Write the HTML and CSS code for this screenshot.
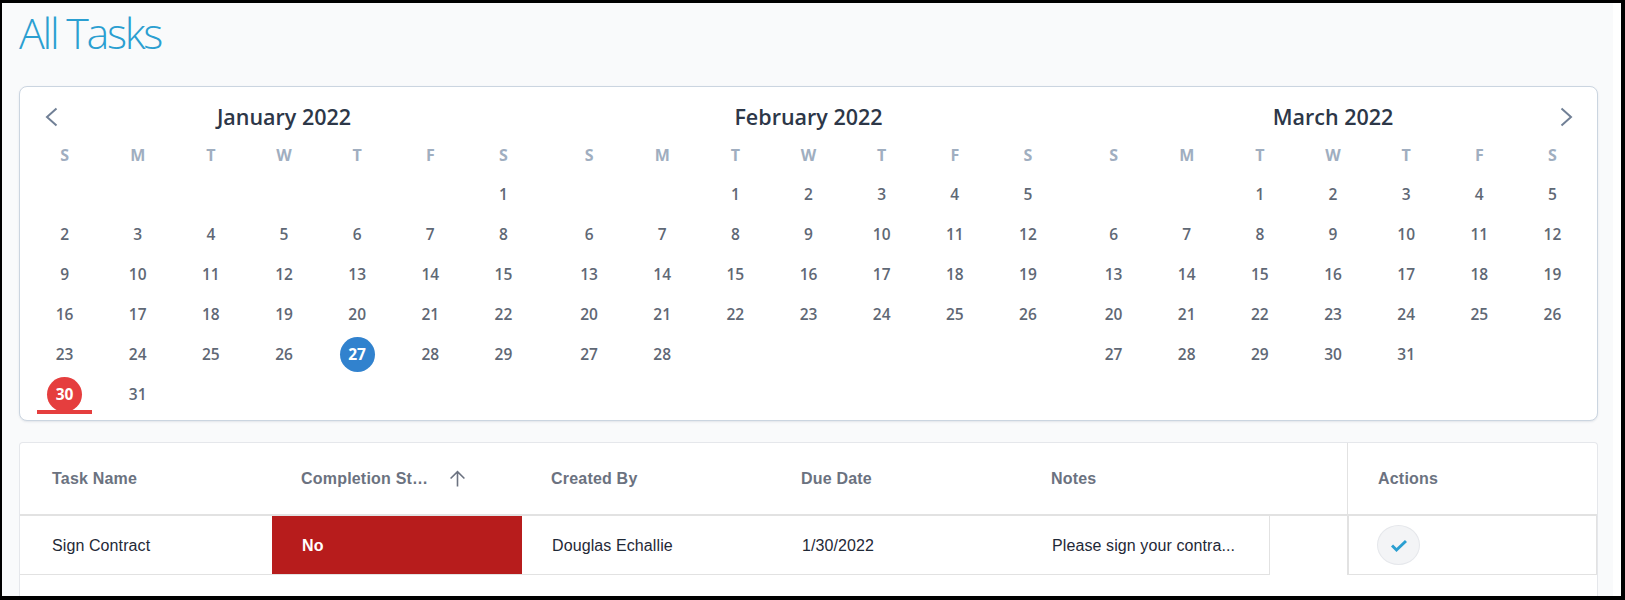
FILE: index.html
```html
<!DOCTYPE html>
<html lang="en">
<head>
<meta charset="utf-8">
<title>All Tasks</title>
<link rel="stylesheet" href="styles.css">
</head>
<body>
<div class="frame">
<main class="main">
  <h1 class="page-title">All Tasks</h1>
  <section class="calendar">
    <div class="month">
      <div class="month-head">
        <svg class="nav" viewBox="0 0 14 20"><path d="M12.500 1.500 3 10l9.500 8.500"/></svg>
        <span class="month-title">January 2022</span>
        <span></span>
      </div>
      <div class="days">
        <span class="wd">S</span><span class="wd">M</span><span class="wd">T</span><span class="wd">W</span><span class="wd">T</span><span class="wd">F</span><span class="wd">S</span>
        <span class="d start-7">1</span>
        <span class="d">2</span><span class="d">3</span><span class="d">4</span><span class="d">5</span><span class="d">6</span><span class="d">7</span><span class="d">8</span>
        <span class="d">9</span><span class="d">10</span><span class="d">11</span><span class="d">12</span><span class="d">13</span><span class="d">14</span><span class="d">15</span>
        <span class="d">16</span><span class="d">17</span><span class="d">18</span><span class="d">19</span><span class="d">20</span><span class="d">21</span><span class="d">22</span>
        <span class="d">23</span><span class="d">24</span><span class="d">25</span><span class="d">26</span><span class="d"><b class="dot today">27</b></span><span class="d">28</span><span class="d">29</span>
        <span class="d flagged"><b class="dot due">30</b></span><span class="d">31</span>
      </div>
    </div>
    <div class="month">
      <div class="month-head">
        <span></span>
        <span class="month-title">February 2022</span>
        <span></span>
      </div>
      <div class="days">
        <span class="wd">S</span><span class="wd">M</span><span class="wd">T</span><span class="wd">W</span><span class="wd">T</span><span class="wd">F</span><span class="wd">S</span>
        <span class="d start-3">1</span><span class="d">2</span><span class="d">3</span><span class="d">4</span><span class="d">5</span>
        <span class="d">6</span><span class="d">7</span><span class="d">8</span><span class="d">9</span><span class="d">10</span><span class="d">11</span><span class="d">12</span>
        <span class="d">13</span><span class="d">14</span><span class="d">15</span><span class="d">16</span><span class="d">17</span><span class="d">18</span><span class="d">19</span>
        <span class="d">20</span><span class="d">21</span><span class="d">22</span><span class="d">23</span><span class="d">24</span><span class="d">25</span><span class="d">26</span>
        <span class="d">27</span><span class="d">28</span>
      </div>
    </div>
    <div class="month">
      <div class="month-head">
        <span></span>
        <span class="month-title">March 2022</span>
        <svg class="nav" viewBox="0 0 14 20"><path d="M2.500 1.500 12 10l-9.500 8.500"/></svg>
      </div>
      <div class="days">
        <span class="wd">S</span><span class="wd">M</span><span class="wd">T</span><span class="wd">W</span><span class="wd">T</span><span class="wd">F</span><span class="wd">S</span>
        <span class="d start-3">1</span><span class="d">2</span><span class="d">3</span><span class="d">4</span><span class="d">5</span>
        <span class="d">6</span><span class="d">7</span><span class="d">8</span><span class="d">9</span><span class="d">10</span><span class="d">11</span><span class="d">12</span>
        <span class="d">13</span><span class="d">14</span><span class="d">15</span><span class="d">16</span><span class="d">17</span><span class="d">18</span><span class="d">19</span>
        <span class="d">20</span><span class="d">21</span><span class="d">22</span><span class="d">23</span><span class="d">24</span><span class="d">25</span><span class="d">26</span>
        <span class="d">27</span><span class="d">28</span><span class="d">29</span><span class="d">30</span><span class="d">31</span>
      </div>
    </div>
  </section>
  <section class="grid">
    <div class="grid-main">
      <div class="head-row">
        <div class="hcell hcell-first">Task Name</div>
        <div class="hcell hcell-sort"><span class="hlabel">Completion St…</span>
          <svg class="sort" viewBox="0 0 16 16"><path d="M8 15.500V1.500M1.500 8 8 1.500 14.500 8"/></svg>
        </div>
        <div class="hcell">Created By</div>
        <div class="hcell">Due Date</div>
        <div class="hcell">Notes</div>
      </div>
      <div class="body-row">
        <div class="cell cell-first">Sign Contract</div>
        <div class="cell cell-no">No</div>
        <div class="cell">Douglas Echallie</div>
        <div class="cell">1/30/2022</div>
        <div class="cell cell-notes">Please sign your contra...</div>
      </div>
    </div>
    <div class="grid-actions">
      <div class="actions-head">Actions</div>
      <div class="actions-cell">
        <button class="check-btn" type="button" aria-label="Complete">
          <svg viewBox="0 0 16 16"><path d="M1 8.500 5.500 13 15 4"/></svg>
        </button>
      </div>
    </div>
  </section>
</main>
<div class="edge"></div>
</div>
</body>
</html>
```
FILE: styles.css
```css
* { box-sizing: border-box; }
html, body { height: 100%; margin: 0; }
body { background: #000; overflow: hidden; }
.frame { display: flex; height: 593px; margin: 3px 4px 4px 2px; }
.main { flex: 1; min-width: 0; display: flex; flex-direction: column; padding: 0 15px 0 17px; background: #f9fafb; overflow: hidden; }
.edge { width: 8px; background: #fff; }

.page-title { margin: 0; height: 83px; padding-top: 3px; font: 300 43px/54px "Open Sans", sans-serif; letter-spacing: -2.300px; color: #2b9fd1; }

.calendar { display: grid; grid-template-columns: repeat(3, 1fr); column-gap: 12.500px; padding: 16px 8px 6px; background: #fff; border: 1px solid #cbd5e0; border-radius: 8px; font-family: "Open Sans", sans-serif; box-shadow: 0 1px 2px rgba(100, 116, 139, .15); }
.month-head { display: grid; grid-template-columns: 46px 1fr 46px; align-items: center; height: 28px; margin-bottom: 7px; }
.month-title { text-align: center; font-size: 21.500px; font-weight: 600; line-height: 28px; color: #2d3748; }
.nav { justify-self: center; width: 14px; height: 20px; fill: none; stroke: #718096; stroke-width: 2; }
.days { display: grid; grid-template-columns: repeat(7, 1fr); grid-auto-rows: 40px; grid-template-rows: 36px; }
.wd, .d { display: flex; align-items: center; justify-content: center; }
.wd { padding-bottom: 2px; font-size: 16px; font-weight: 700; color: #a0aec0; }
.d { position: relative; font-size: 15.500px; font-weight: 600; color: #5f6875; }
.start-3 { grid-column-start: 3; }
.start-7 { grid-column-start: 7; }
.dot { display: flex; align-items: center; justify-content: center; width: 35px; height: 35px; border-radius: 50%; color: #fff; font-weight: 700; }
.today { background: #3182ce; }
.due { background: #e53e3e; }
.flagged::after { content: ""; position: absolute; left: 9px; bottom: 0; width: 55px; height: 4px; background: #e53e3e; }

.grid { flex: 1; display: flex; margin-top: 21px; background: #fff; border: 1px solid #e5e7eb; border-bottom: 0; border-radius: 4px 4px 0 0; font-family: "Liberation Sans", Arial, sans-serif; font-size: 16px; }
.grid-main { flex: 1; min-width: 0; }
.grid-actions { width: 250px; }
.head-row { display: flex; height: 73px; border-bottom: 2px solid #e2e2e2; }
.hcell { width: 250px; display: flex; align-items: center; padding: 0 0 0 28px; font-weight: 700; letter-spacing: .2px; color: #6b7280; }
.hcell-first { width: 252px; padding-left: 32px; }
.hcell-sort { width: 251px; gap: 21px; padding-left: 29px; }
.sort { width: 17px; height: 17px; fill: none; stroke: #6b7280; stroke-width: 1.500; }
.body-row { display: flex; width: 1250px; height: 59px; border-bottom: 1px solid #e2e2e2; border-right: 1px solid #e2e2e2; }
.cell { width: 250px; display: flex; align-items: center; padding: 2px 0 0 30px; letter-spacing: .1px; color: #1f2937; }
.cell-first { width: 252px; padding-left: 32px; }
.cell-no { background: #b71c1c; color: #fff; font-weight: 700; }
.cell-notes { flex: 1; min-width: 0; white-space: nowrap; }
.actions-head { height: 73px; display: flex; align-items: center; padding: 0 0 0 30px; border-left: 1px solid #e2e2e2; border-bottom: 2px solid #e2e2e2; font-weight: 700; letter-spacing: .2px; color: #6b7280; }
.actions-cell { height: 59px; display: flex; align-items: center; padding-left: 28px; border-left: 2px solid #e2e2e2; border-right: 1px solid #e2e2e2; border-bottom: 1px solid #e2e2e2; }
.check-btn { width: 43px; height: 40px; padding: 0; display: flex; align-items: center; justify-content: center; background: #f3f4f6; border: 1px solid #e5e7eb; border-radius: 50%; }
.check-btn svg { width: 16px; height: 16px; fill: none; stroke: #2b9fd1; stroke-width: 3; }
```
